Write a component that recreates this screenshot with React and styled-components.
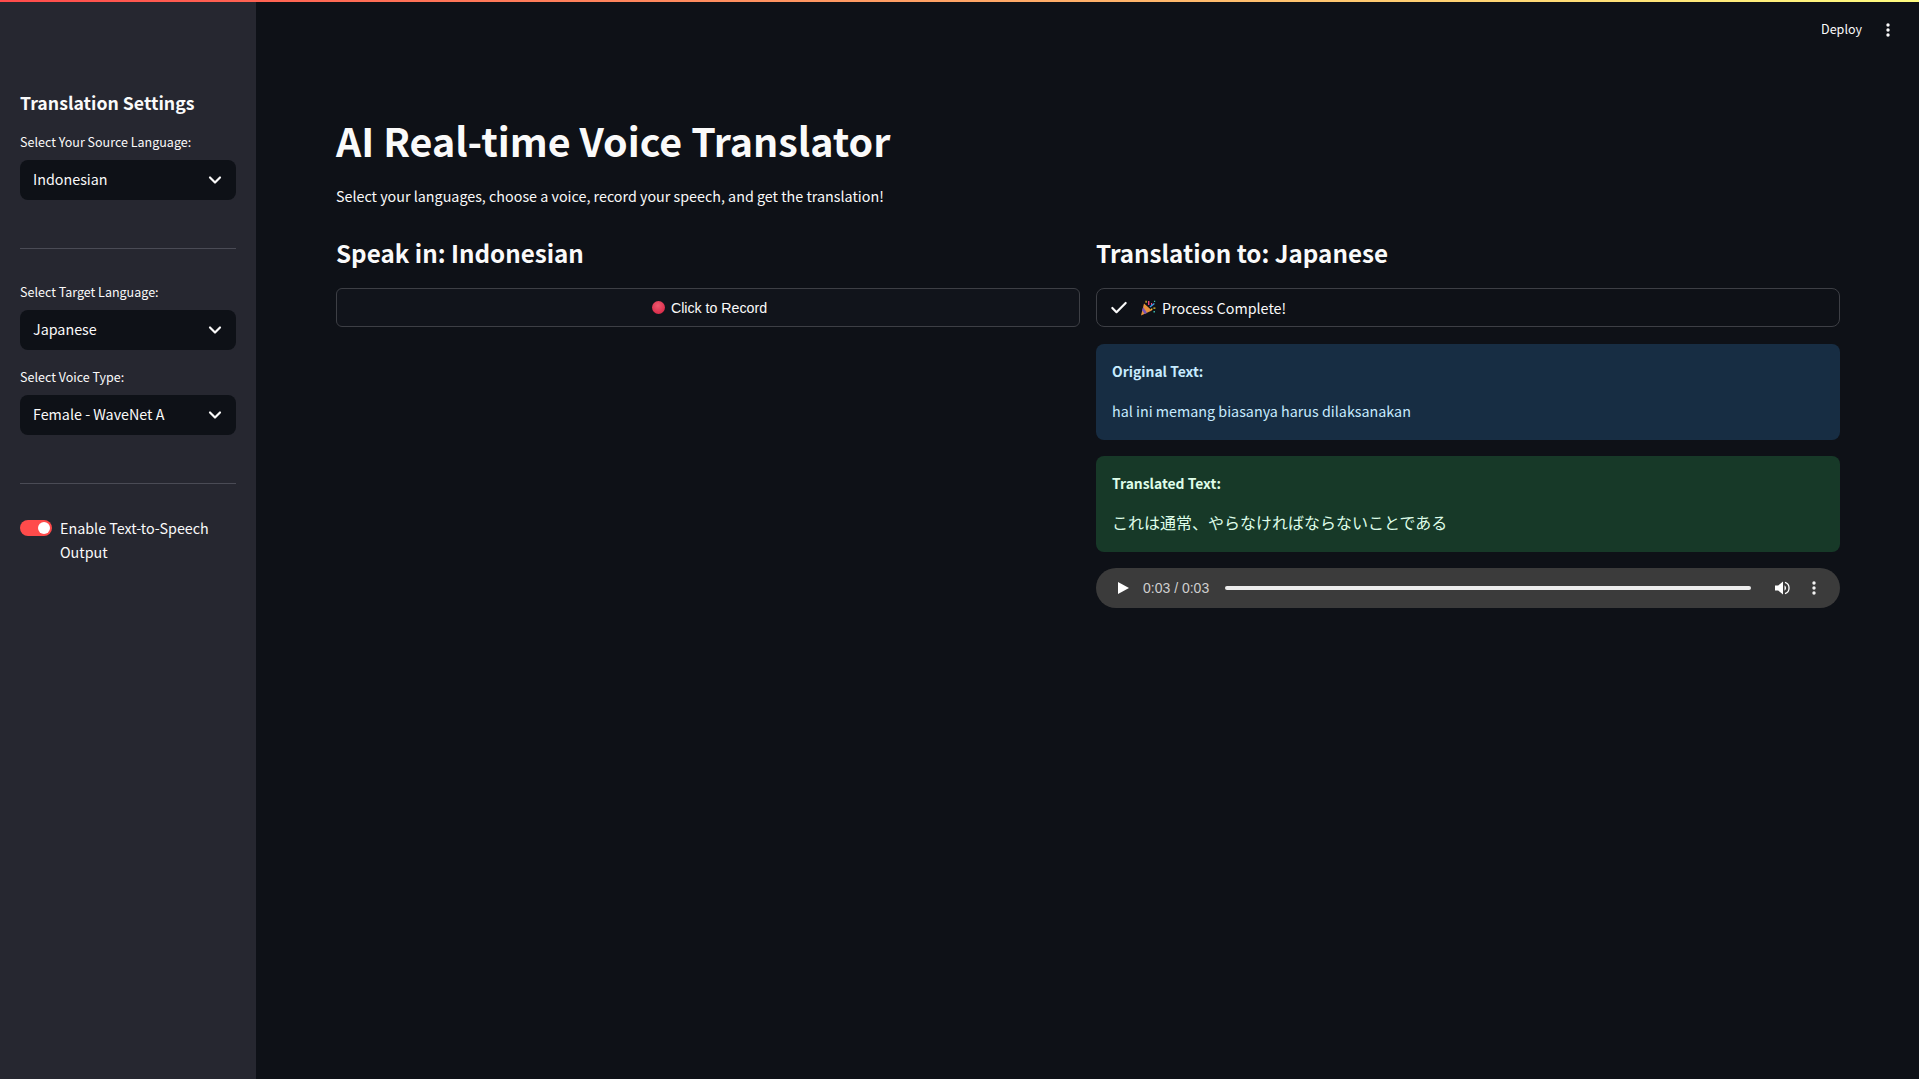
import React from 'react';
import styled, { createGlobalStyle } from 'styled-components';
import { Check, ChevronDown } from 'lucide-react';

const GlobalStyle = createGlobalStyle`
  html, body {
    margin: 0;
    padding: 0;
    height: 100%;
    background: #0e1117;
  }
  #root {
    height: 100%;
  }
  * {
    box-sizing: border-box;
  }
`;

const Page = styled.div`
  height: 100vh;
  display: flex;
  flex-direction: column;
  overflow: hidden;
  color: #fafafa;
  font-family: 'Noto Sans CJK JP', 'Liberation Sans', sans-serif;
`;

const GradientBar = styled.div`
  height: 2px;
  flex: none;
  background: linear-gradient(90deg, #ff4b4b, #fffd80);
`;

const Body = styled.div`
  flex: 1;
  display: flex;
  min-height: 0;
`;

const Sidebar = styled.aside`
  width: 256px;
  flex: none;
  padding: 87px 20px 0;
  background: #262730;
`;

const SidebarTitle = styled.h2`
  margin: 0 0 16px;
  font-size: 17.7px;
  line-height: 27px;
  font-weight: 600;
`;

const FieldLabel = styled.div`
  font-size: 12.53px;
  line-height: 20px;
  height: 20px;
  margin-bottom: 8px;
`;

const Field = styled.div`
  margin-bottom: ${p => p.$gap || 0}px;
`;

const SelectBox = styled.div`
  height: 40px;
  padding: 0 11px 0 13px;
  display: flex;
  align-items: center;
  justify-content: space-between;
  background: #0e1117;
  border-radius: 8px;
  font-size: 14.32px;
`;

const SelectValue = styled.span`
  padding-bottom: 3px;
`;

const Rule = styled.hr`
  margin: 48px 0 ${p => p.$after}px;
  border: 0;
  height: 1px;
  background: #4a4b55;
`;

const ToggleRow = styled.div`
  display: flex;
  gap: 8px;
  font-size: 14.32px;
  line-height: 24px;
`;

const ToggleTrack = styled.div`
  width: 32px;
  height: 16px;
  margin-top: 4px;
  flex: none;
  padding: 2px;
  display: flex;
  justify-content: flex-end;
  border-radius: 8px;
  background: #ff4b4b;
`;

const ToggleKnob = styled.div`
  width: 12px;
  height: 12px;
  border-radius: 50%;
  background: #fff;
`;

const Main = styled.main`
  flex: 1;
  min-width: 0;
  display: flex;
  flex-direction: column;
  padding: 0 79px 0 80px;
`;

const TopBar = styled.div`
  height: 56px;
  flex: none;
  margin-right: -79px;
  padding-right: 29px;
  display: flex;
  align-items: center;
  justify-content: flex-end;
  gap: 24px;
  font-size: 12.53px;
`;

const DeployLabel = styled.span`
  padding-bottom: 3px;
`;

const Title = styled.h1`
  margin: 52px 0 0;
  font-size: 39.4px;
  line-height: 60px;
  font-weight: 700;
`;

const Intro = styled.p`
  margin: 12px 0 0;
  font-size: 14.32px;
  line-height: 28px;
`;

const Columns = styled.div`
  margin-top: 23px;
  display: grid;
  grid-template-columns: 1fr 1fr;
  gap: 16px;
`;

const Column = styled.section`
  display: flex;
  flex-direction: column;
`;

const ColumnHeading = styled.h3`
  margin: 0 0 15px;
  font-size: 24.2px;
  line-height: 40px;
  font-weight: 600;
`;

const RecordButton = styled.div`
  height: 39px;
  padding-left: 3px;
  display: flex;
  align-items: center;
  justify-content: center;
  gap: 6px;
  background: #11141b;
  border: 1px solid #3d3f45;
  border-radius: 6px;
  font-family: 'Liberation Sans', sans-serif;
  font-size: 14.2px;
`;

const RecordDot = styled.span`
  width: 13px;
  height: 13px;
  border-radius: 50%;
  background: radial-gradient(circle at 45% 35%, #f0596f, #d92c4a 75%);
`;

const StatusBox = styled.div`
  height: 39px;
  padding: 0 12px;
  display: flex;
  align-items: center;
  background: #0e1117;
  border: 1px solid #3d3f45;
  border-radius: 8px;
  font-size: 14.32px;
`;

const StatusText = styled.span`
  margin-left: 6px;
`;

const StatusIcon = styled.svg`
  margin-left: 11px;
  flex: none;
`;

const Alert = styled.div`
  height: 96px;
  margin-top: ${p => p.$top}px;
  padding: 15px 16px;
  border-radius: 8px;
  font-size: 14.32px;
  color: ${p => (p.$tone === 'green' ? '#dffde9' : '#c7ebff')};
  background: ${p => (p.$tone === 'green' ? '#173928' : '#172d43')};
`;

const AlertHeading = styled.div`
  font-size: 13.9px;
  font-weight: 600;
  line-height: 24px;
`;

const AlertText = styled.div`
  margin-top: ${p => (p.$size ? 15 : 16)}px;
  line-height: 24px;
  font-size: ${p => p.$size || 14.32}px;
`;

const AudioPlayer = styled.div`
  height: 40px;
  margin-top: 16px;
  padding: 0 24px 0 22px;
  display: flex;
  align-items: center;
  background: #3b3b3b;
  border-radius: 20px;
`;

const AudioTime = styled.span`
  margin: 0 16px 0 14px;
  font-family: 'Liberation Sans', sans-serif;
  font-size: 14px;
  color: #cfcfcf;
`;

const AudioTrack = styled.div`
  flex: 1;
  height: 4px;
  border-radius: 2px;
  background: #ececec;
`;

const AudioVolume = styled.svg`
  margin: 0 21px 0 24px;
  flex: none;
`;

const DotsIcon = ({ color = '#fafafa' }) => (
  <svg width="4" height="14" viewBox="0 0 4 14">
    <circle cx="2" cy="2" r="1.7" fill={color} />
    <circle cx="2" cy="7" r="1.7" fill={color} />
    <circle cx="2" cy="12" r="1.7" fill={color} />
  </svg>
);

const PartyIcon = () => (
  <StatusIcon width="16" height="16" viewBox="0 0 16 16">
    <path d="M4 3.5 12 10.5 1 15.5Z" fill="#e8913a" />
    <path d="M3.2 7 7 12.9 4.5 14 2.2 10.2Z" fill="#7a55b8" />
    <path d="M8 1h1.4v4H8zM11 3h1.2v2.4H11z" fill="#e8407f" />
    <path d="M9.5 6.5 14 3l.8 1-4.4 3.4z" fill="#3aa0e8" />
    <path d="M5.5 .8h1.2v2H5.5zM13.4 7.5h2v1.2h-2zM11 8.5h1.4v1.4H11z" fill="#f2c230" />
    <path d="M13.5 11h1.4v1.4h-1.4zM14 .8h1.2V2H14z" fill="#3cc4b0" />
  </StatusIcon>
);

const Select = ({ value }) => (
  <SelectBox>
    <SelectValue>{value}</SelectValue>
    <ChevronDown size={20} strokeWidth={2.6} color="#fafafa" />
  </SelectBox>
);

export default function App() {
  return (
    <Page>
      <GlobalStyle />
      <GradientBar />
      <Body>
        <Sidebar>
          <SidebarTitle>Translation Settings</SidebarTitle>
          <Field>
            <FieldLabel>Select Your Source Language:</FieldLabel>
            <Select value="Indonesian" />
          </Field>
          <Rule $after={33} />
          <Field $gap={17}>
            <FieldLabel>Select Target Language:</FieldLabel>
            <Select value="Japanese" />
          </Field>
          <Field>
            <FieldLabel>Select Voice Type:</FieldLabel>
            <Select value="Female - WaveNet A" />
          </Field>
          <Rule $after={32} />
          <ToggleRow>
            <ToggleTrack>
              <ToggleKnob />
            </ToggleTrack>
            <span>Enable Text-to-Speech Output</span>
          </ToggleRow>
        </Sidebar>
        <Main>
          <TopBar>
            <DeployLabel>Deploy</DeployLabel>
            <DotsIcon />
          </TopBar>
          <Title>AI Real-time Voice Translator</Title>
          <Intro>Select your languages, choose a voice, record your speech, and get the translation!</Intro>
          <Columns>
            <Column>
              <ColumnHeading>Speak in: Indonesian</ColumnHeading>
              <RecordButton>
                <RecordDot />
                Click to Record
              </RecordButton>
            </Column>
            <Column>
              <ColumnHeading>Translation to: Japanese</ColumnHeading>
              <StatusBox>
                <Check size={20} strokeWidth={2.6} color="#fafafa" />
                <PartyIcon />
                <StatusText>Process Complete!</StatusText>
              </StatusBox>
              <Alert $top={17}>
                <AlertHeading>Original Text:</AlertHeading>
                <AlertText>hal ini memang biasanya harus dilaksanakan</AlertText>
              </Alert>
              <Alert $top={16} $tone="green">
                <AlertHeading>Translated Text:</AlertHeading>
                <AlertText $size={16}>これは通常、やらなければならないことである</AlertText>
              </Alert>
              <AudioPlayer>
                <svg width="11" height="12" viewBox="0 0 11 12">
                  <path d="M0 0 11 6 0 12Z" fill="#fff" />
                </svg>
                <AudioTime>0:03 / 0:03</AudioTime>
                <AudioTrack />
                <AudioVolume width="16" height="16" viewBox="0 0 16 16">
                  <path d="M0 5.5h3.2L8 1.5v13l-4.8-4H0Z" fill="#fff" />
                  <path d="M9.5 5.2a3.3 3.3 0 0 1 0 5.6Z" fill="#fff" />
                  <path d="M10 2.4a5.9 5.9 0 0 1 0 11.2" fill="none" stroke="#fff" strokeWidth="1.3" />
                </AudioVolume>
                <DotsIcon color="#f2f2f2" />
              </AudioPlayer>
            </Column>
          </Columns>
        </Main>
      </Body>
    </Page>
  );
}
